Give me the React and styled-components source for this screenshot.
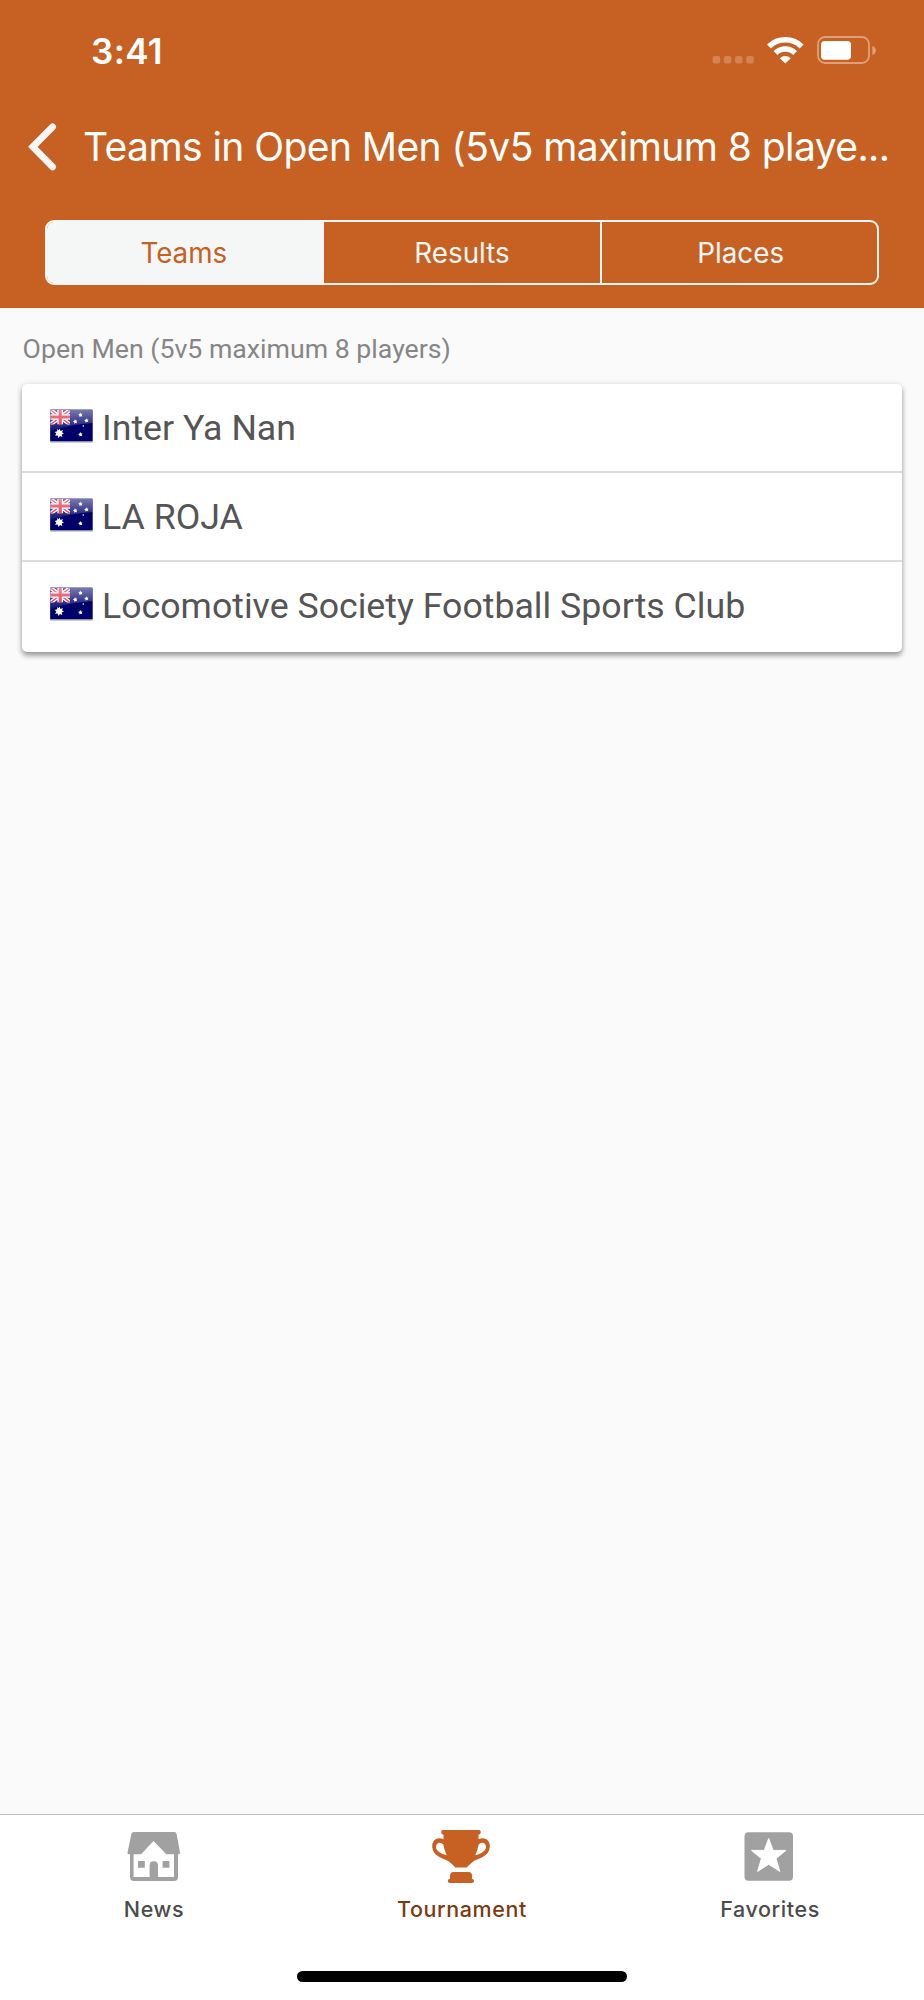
import React, { useState } from 'react'
import styled, { createGlobalStyle } from 'styled-components'

const GlobalStyle = createGlobalStyle`
* {
    box-sizing: border-box;
}
body {
    margin: 0;
    background: #fafafa;
}
button {
    border: 0;
    padding: 0;
    background: none;
    font: inherit;
    color: inherit;
}
svg {
    display: block;
    flex: none;
}
`

const Screen = styled.div`
display: flex;
flex-direction: column;
width: 924px;
height: 2000px;
overflow: hidden;
background: #fafafa;
font-family: Inter, sans-serif;
`

const Header = styled.header`
height: 308px;
flex: none;
background: #c66123;
color: white;
`

const StatusBar = styled.div`
display: flex;
align-items: center;
justify-content: space-between;
height: 100px;
padding: 0 48px 0 91px;
`

const Time = styled.span`
padding-top: 1px;
font-size: 35px;
font-weight: 600;
line-height: 42px;
letter-spacing: 0.4px;
`

const StatusIcons = styled.div`
display: flex;
align-items: center;
`

const TitleBar = styled.div`
display: flex;
align-items: center;
height: 94px;
padding-left: 24px;
`

const BackButton = styled.button`
width: 59px;
height: 60px;
`

const Title = styled.h1`
margin: 0;
font-size: 39px;
font-weight: 400;
line-height: 50px;
letter-spacing: -0.57px;
white-space: nowrap;
`

const Tabs = styled.div`
display: flex;
width: 834px;
height: 65px;
margin: 26px 0 0 45px;
border: 2px solid #f5f7f6;
border-radius: 9px;
overflow: hidden;
`

const Tab = styled.button`
flex: none;
width: 33.333%;
background: ${props => props.$active ? '#f5f7f6' : 'transparent'};
color: ${props => props.$active ? '#c66123' : '#f5f7f6'};
font-size: 27.8px;
font-weight: 400;
line-height: 62px;

&:first-child {
    padding-right: 3px;
}
&:last-child {
    padding-left: 2px;
    border-left: 2px solid #f5f7f6;
}
`

const Content = styled.main`
flex: 1;
padding: 0 22px;
font-family: Roboto, sans-serif;
`

const GroupName = styled.h2`
margin: 0;
padding: 25px 0 19px 0.6px;
font-size: 26.7px;
font-weight: 400;
line-height: 32px;
color: #868686;
white-space: nowrap;
`

const Card = styled.div`
height: 268px;
border-radius: 5px;
background: white;
box-shadow: 0 4px 5px rgba(0, 0, 0, 0.3), 0 1px 6px rgba(0, 0, 0, 0.16);
`

const TeamRow = styled.div`
display: flex;
align-items: center;
height: 89px;
padding-left: 27px;
border-bottom: 2px solid #dcdcdc;

&:last-child {
    border-color: transparent;
}
`

const FlagIcon = styled.svg`
margin-top: -4px;
`

const TeamName = styled.span`
margin-left: 7px;
padding-top: 1px;
font-size: 35.7px;
line-height: 42px;
color: #555;
white-space: nowrap;
`

const TabBar = styled.nav`
display: flex;
height: 186px;
flex: none;
flex-wrap: wrap;
align-content: flex-start;
justify-content: center;
border-top: 1px solid #bdbdbd;
background: white;
`

const NavItem = styled.button`
display: flex;
flex-direction: column;
align-items: center;
width: 308px;
height: 156px;
padding-top: 12px;
color: ${props => props.$active ? '#7d3a10' : '#4c4c4c'};
`

const NavLabel = styled.span`
margin-top: 9px;
font-size: 21.5px;
font-weight: 500;
line-height: 26px;
letter-spacing: 0.6px;
`

const HomeIndicator = styled.div`
width: 330px;
height: 11px;
border-radius: 6px;
background: black;
`

const Signal = () => (
    <svg width="55" height="28" viewBox="712 36 55 28" fill="#d48352">
        {[712.6, 723.8, 735, 746.2].map(x => <rect key={x} x={x} y="56" width="7.6" height="7.4" rx="2.2" />)}
    </svg>
)

const Wifi = () => (
    <svg width="50" height="28" viewBox="767 36 50 28">
        <g fill="none" stroke="white">
            <path d="M769 46.5a23.2 23.2 0 0 1 32.6 0" strokeWidth="5.6" />
            <path d="M775.5 53a14 14 0 0 1 19.6 0" strokeWidth="5.4" />
        </g>
        <path d="M779.8 58.2a8 8 0 0 1 11 0l-5.5 5.2z" fill="white" />
    </svg>
)

const Battery = () => (
    <svg width="59" height="28" viewBox="817 36 59 28">
        <rect x="818" y="37" width="51" height="26" rx="7" fill="none" stroke="#df9f78" strokeWidth="1.8" />
        <rect x="821" y="41" width="30" height="18.8" rx="3.8" fill="white" />
        <path d="M872.3 46q3.6 1.4 3.6 4.5t-3.6 4.5z" fill="#df9f78" />
    </svg>
)

const Chevron = () => (
    <svg width="60" height="60" viewBox="24 118 60 60">
        <path d="M52.6 127.8L32.8 147.8l19.8 20" fill="none" stroke="#f5f7f6" strokeWidth="6.8" strokeLinecap="round" />
    </svg>
)

const Flag = () => (
    <FlagIcon width="46" height="36" viewBox="0 0 46 36">
        <defs>
            <linearGradient id="gloss" x1="0" y1="0" x2="0" y2="1">
                <stop offset="0" stopColor="#fff" stopOpacity=".48" />
                <stop offset="1" stopColor="#fff" stopOpacity=".06" />
            </linearGradient>
            <clipPath id="canton"><rect x="1.5" y="2" width="19.5" height="14.5" /></clipPath>
        </defs>
        <rect x="1" y="2.5" width="43" height="32.3" rx="1" fill="#000" opacity=".25" />
        <rect x="1.2" y="1.4" width="42.4" height="31.8" rx=".6" fill="#00006b" />
        <g clipPath="url(#canton)">
            <path d="M1.5 2L21 16.5M21 2L1.5 16.5" stroke="#fff" strokeWidth="4" />
            <path d="M1.5 2L21 16.5M21 2L1.5 16.5" stroke="#d8233d" strokeWidth="1.5" />
            <path d="M11.2 2v14.5M1 9h20" stroke="#fff" strokeWidth="5.6" />
            <path d="M11.2 2v14.5M1 9h20" stroke="#dc2238" strokeWidth="3.2" />
        </g>
        <path d="M1.2 1.4h42.4v13.5q-20 1-42.4 8z" fill="url(#gloss)" />
        <g fill="#fff">
            <path d="M10.5 20.5l1 2.4 2.5-.8-1 2.2 2 1.2-2.3 1 .6 2.5-2.3-1.1-1.5 2-.8-2.3-2.6.2 1.2-2.2-1.6-1.6 2.5-.7.1-2.4 1.5 1.3z" />
            <path id="star" d="M31.3 4.6l.7 1.3 1.5-.1-.7 1.3.5 1.4-1.5-.3-1.2.9-.2-1.5-1.2-.8 1.3-.7z" />
            <use href="#star" x="-5.3" y="6.7" />
            <use href="#star" x="6" y="5.6" />
            <use href="#star" x="0" y="19.5" />
            <circle cx="34.3" cy="18" r=".8" />
        </g>
    </FlagIcon>
)

const House = () => (
    <svg width="56" height="60" viewBox="126 1827 56 60">
        <path d="M134 1832h40.5q1.5 0 2 1.5l3.5 19q.3 1.7-1.5 1.7h-.5V1877q0 4-4 4h-40q-4 0-4-4v-22.8h-1q-2 0-1.5-1.7l4-19q.5-1.5 2.5-1.5z" fill="#a1a1a1" />
        <path d="M153.5 1841l12.8 13.2h7.7V1877h-16v-11.5q0-4.3-4.2-4.3t-4.2 4.3V1877h-16v-22.8h7.5z" fill="white" />
        <path d="M138 1861h6.8v6.8H138zM162.6 1861h6.8v6.8h-6.8z" fill="#a1a1a1" />
    </svg>
)

const Trophy = () => (
    <svg width="60" height="60" viewBox="432 1827 60 60" fill="#c66123">
        <path d="M443 1830h36q1.8 0 1.8 2.2 0 2.1-2.3 2.6v4.4q3-1.5 6-.7 5.5 1.5 5.3 8.5-.3 6.5-7.5 10.2l-8 3.6q-2.5 1.4-7.6 6.7h-11.4q-5.1-5.3-7.6-6.7l-8-3.6q-7.2-3.7-7.5-10.2-.2-7 5.3-8.5 3-.8 6 .7v-4.4q-2.3-.5-2.3-2.6 0-2.2 1.8-2.2z" />
        <path d="M443.3 1844.5q-2.5-2.5-5-1.5-3 1.7-2 5.7 1.2 3.8 10.4 6.600-2.3-5-3.4-10.800zM478.7 1844.5q2.5-2.5 5-1.5 3 1.7 2 5.7-1.2 3.8-10.4 6.600 2.3-5 3.4-10.800z" fill="white" />
        <path d="M453.5 1872h15q3.500 0 3.500 3.500v3.300q2 .3 2 2.300 0 1.900-2 1.900h-22q-2.200 0-2.200-1.900 0-2 2.200-2.300v-3.300q0-3.500 3.500-3.500z" />
    </svg>
)

const Star = () => (
    <svg width="60" height="60" viewBox="740 1827 60 60">
        <rect x="744.5" y="1832.2" width="48.5" height="48.6" rx="4" fill="#a1a1a1" />
        <path d="M768.7 1838.5l4.5 11.9h12.7l-9.9 8.2 3.8 12.8-11.1-7.1-11.1 7.1 3.8-12.8-9.9-8.2h12.7z" fill="white" stroke="white" strokeWidth="1" strokeLinejoin="round" />
    </svg>
)

const tabs = ['Teams', 'Results', 'Places']
const teams = ['Inter Ya Nan', 'LA ROJA', 'Locomotive Society Football Sports Club']
const nav = [
    { label: 'News', icon: House },
    { label: 'Tournament', icon: Trophy },
    { label: 'Favorites', icon: Star },
]

export default function App() {

    const [tab, setTab] = useState('Teams')

    return (
        <>
            <GlobalStyle />
            <Screen>
                <Header>
                    <StatusBar>
                        <Time>3:41</Time>
                        <StatusIcons><Signal /><Wifi /><Battery /></StatusIcons>
                    </StatusBar>
                    <TitleBar>
                        <BackButton><Chevron /></BackButton>
                        <Title>Teams in Open Men (5v5 maximum 8 playe...</Title>
                    </TitleBar>
                    <Tabs>
                        {tabs.map(name => (
                            <Tab key={name} $active={name === tab} onClick={() => setTab(name)}>{name}</Tab>
                        ))}
                    </Tabs>
                </Header>
                <Content>
                    <GroupName>Open Men (5v5 maximum 8 players)</GroupName>
                    <Card>
                        {teams.map(name => (
                            <TeamRow key={name}>
                                <Flag />
                                <TeamName>{name}</TeamName>
                            </TeamRow>
                        ))}
                    </Card>
                </Content>
                <TabBar>
                    {nav.map(({ label, icon: Icon }) => (
                        <NavItem key={label} $active={label === 'Tournament'}>
                            <Icon />
                            <NavLabel>{label}</NavLabel>
                        </NavItem>
                    ))}
                    <HomeIndicator />
                </TabBar>
            </Screen>
        </>
    )
}
